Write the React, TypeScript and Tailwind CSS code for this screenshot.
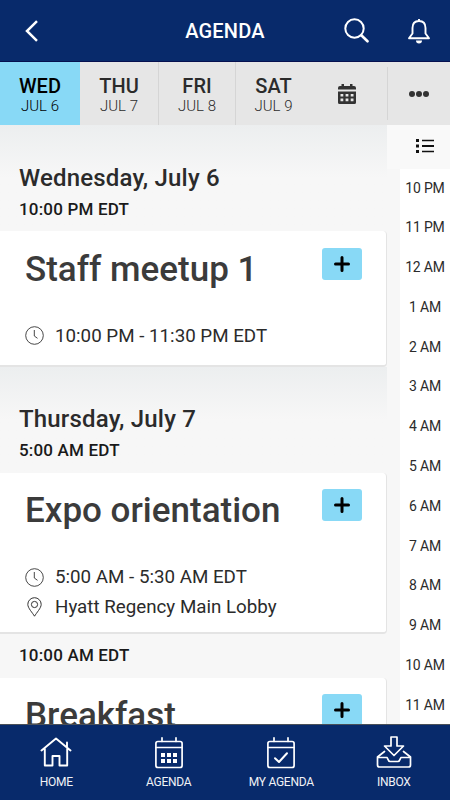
import React from 'react';

interface Session {
  title: string;
  time?: string;
  place?: string;
}

const days = [
  { name: 'WED', date: 'JUL 6', box: 'w-20 bg-[#88d9f6] text-black' },
  { name: 'THU', date: 'JUL 7', box: 'w-[78px] text-[#2b2b2b]' },
  { name: 'FRI', date: 'JUL 8', box: 'w-[77px] border-l border-[#d5d5d5] text-[#2b2b2b]' },
  { name: 'SAT', date: 'JUL 9', box: 'w-[76px] border-l border-[#d5d5d5] text-[#2b2b2b]' },
];

const hours = [
  '10 PM', '11 PM', '12 AM', '1 AM', '2 AM', '3 AM', '4 AM',
  '5 AM', '6 AM', '7 AM', '8 AM', '9 AM', '10 AM', '11 AM',
];

const CalendarIcon = () => (
  <svg width="18" height="20" viewBox="0 0 18 20" fill="#333">
    <path d="M0 5.500V4a2 2 0 0 1 2-2h1.500V0H6v2h6V0h2.500v2H16a2 2 0 0 1 2 2v1.500z" />
    <path fillRule="evenodd" d="M0 7.500h18V18.500a1.500 1.500 0 0 1-1.500 1.500h-15A1.500 1.500 0 0 1 0 18.500zM2.500 10v2.500h2.800V10zm5.100 0v2.500h2.800V10zm5.100 0v2.500h2.800V10zM2.500 14.500v2.800h2.800v-2.800zm5.100 0v2.800h2.800v-2.800zm5.100 0v2.800h2.800v-2.800z" />
  </svg>
);

const ListIcon = () => (
  <svg width="18" height="14" viewBox="0 0 18 14" fill="#111">
    <path d="M0 0h3v3H0zM0 5.500h3v3H0zM0 11h3v3H0zM6 .8h12v1.400H6zM6 6h12v2H6zM6 11.800h12v1.400H6z" />
  </svg>
);

const ClockIcon = () => (
  <svg width="19" height="19" viewBox="0 0 19 19" fill="none" stroke="#333" strokeWidth="0.900">
    <circle cx="9.500" cy="9.500" r="8.800" />
    <path d="M9.300 4v6l3.200 2.300" />
  </svg>
);

const PinIcon = () => (
  <svg width="19" height="20" viewBox="0 0 19 20" fill="none" stroke="#333" strokeWidth="1">
    <path d="M9.500 19.200C7.500 15.800 2.800 11 2.800 7.400a6.700 6.700 0 0 1 13.400 0c0 3.600-4.700 8.400-6.700 11.800z" />
    <circle cx="9.500" cy="7.500" r="3.100" />
  </svg>
);

const HomeIcon = () => (
  <svg width="32" height="30" viewBox="0 0 32 30" fill="none" stroke="#fff" strokeWidth="1.900" strokeLinejoin="round" strokeLinecap="round">
    <path d="M1.500 13.500 16 1.500 30.500 13.500M4.800 12v16.500h7.700V19h7v9.500h7.700V12M27 10V5.500" />
  </svg>
);

const AgendaIcon = ({ checked = false }: { checked?: boolean }) => (
  <svg width="30" height="33" viewBox="0 0 30 33" fill="none" stroke="#fff" strokeWidth="1.700" strokeLinecap="round" strokeLinejoin="round">
    <rect x="1.900" y="5.500" width="26.200" height="26" rx="2" />
    <path d="M2 11.500h26M8 1.800v3.500M22 1.800v3.500" />
    {checked ? (
      <path d="m9 22.200 4 3.800 8-8.700" strokeWidth="2" />
    ) : (
      <path stroke="none" fill="#fff" d="M7 17h4v4H7zM13 17h4v4h-4zM19 17h4v4h-4zM7 23h4v4H7zM13 23h4v4h-4zM19 23h4v4h-4z" />
    )}
  </svg>
);

const InboxIcon = () => (
  <svg width="36" height="32" viewBox="0 0 36 32" fill="none" stroke="#fff" strokeWidth="1.700" strokeLinejoin="round" strokeLinecap="round">
    <path d="M15 1h6v9h6.500L18 19.500 8.500 10H15z" />
    <path d="M8.500 15.500 1.500 21v8a2 2 0 0 0 2 2h29a2 2 0 0 0 2-2v-8l-7-5.500M1.500 21.500h9.500c1 1 1 4 3 4h8c2 0 2-3 3-4h9.500" />
  </svg>
);

const tabs = [
  { label: 'HOME', icon: <HomeIcon /> },
  { label: 'AGENDA', icon: <AgendaIcon /> },
  { label: 'MY AGENDA', icon: <AgendaIcon checked /> },
  { label: 'INBOX', icon: <InboxIcon /> },
];

const DayHeading: React.FC<{ day: string; time: string }> = ({ day, time }) => (
  <div className="bg-linear-to-b from-[#eceeef] to-[#f7f7f7] to-50% pl-[19px] flex flex-col justify-end pb-[10.800px]">
    <h2 className="text-2xl leading-[30px] font-medium tracking-[0.180px] text-[#2b2b2b]">{day}</h2>
    <p className="mt-1 text-[17px] leading-6 font-medium tracking-[0.180px] text-[#1a1a1a]">{time}</p>
  </div>
);

const SessionCard: React.FC<Session> = ({ title, time, place }) => (
  <div className="w-[387px] h-full rounded-r-[4px] bg-white border-r border-b-2 border-[#e4e4e4] pl-[25px] pr-6 pt-[16.400px]">
    <div className="flex justify-between">
      <h3 className="text-[35px] leading-[44px] font-medium text-[#3b3b3b]">{title}</h3>
      <button className="w-10 h-8 rounded-[3px] bg-[#88d9f6] flex items-center justify-center">
        <svg width="16" height="16" viewBox="0 0 16 16" stroke="#000" strokeWidth="3" strokeLinecap="round">
          <path d="M8 1.500v13M1.500 8h13" />
        </svg>
      </button>
    </div>
    {time && (
      <div className="mt-[29px] flex items-center h-[30px] gap-[11px] text-[18.750px] text-[#2b2b2b]">
        <ClockIcon />
        <span>{time}</span>
      </div>
    )}
    {place && (
      <div className="flex items-center h-[30px] gap-[11px] text-[18.750px] text-[#2b2b2b]">
        <PinIcon />
        <span>{place}</span>
      </div>
    )}
  </div>
);

export default function App() {
  return (
    <div className="w-[450px] h-[800px] flex flex-col overflow-hidden bg-[#f7f7f7] font-['Roboto',sans-serif]">
      <header className="h-[62px] shrink-0 bg-[#082a6b] border-b border-[#06104f] grid grid-cols-3 items-center text-white">
        <svg className="ml-[25px]" width="14" height="22" viewBox="0 0 14 22" fill="none" stroke="#fff" strokeWidth="2.500">
          <path d="M12 1.200 2 11l10 9.800" />
        </svg>
        <h1 className="text-center text-xl font-medium tracking-[0.200px]">AGENDA</h1>
        <div className="flex justify-end items-center gap-[39px] pr-5">
          <svg width="25" height="25" viewBox="0 0 25 25" fill="none" stroke="#fff" strokeWidth="2" strokeLinecap="round">
            <circle cx="10.500" cy="10.500" r="9.200" />
            <path d="m17.300 17.300 6.200 6" strokeWidth="2.600" />
          </svg>
          <svg width="22" height="26" viewBox="0 0 22 26" fill="none" stroke="#fff" strokeWidth="1.900" strokeLinejoin="round">
            <path d="M11 1v2M11 3C7 3 4.500 5.500 4.500 10v5.500L1 20.200h20l-3.500-4.700V10C17.500 5.500 15 3 11 3z" />
            <path d="M8 22.500h6a3 3 0 0 1-6 0z" fill="#fff" stroke="none" />
          </svg>
        </div>
      </header>

      <nav className="h-[63px] shrink-0 flex bg-[#e6e6e6]">
        {days.map(d => (
          <div key={d.name} className={`flex flex-col items-center pt-3 ${d.box}`}>
            <span className="text-[20px] leading-6 font-medium">{d.name}</span>
            <span className="text-[15px] leading-4 font-light">{d.date}</span>
          </div>
        ))}
        <div className="flex-1 pr-1 flex items-center justify-center">
          <CalendarIcon />
        </div>
        <div className="w-[63px] my-[5px] border-l border-[#d5d5d5] flex items-center justify-center gap-[1px]">
          <i className="size-1.5 rounded-full bg-[#333]" />
          <i className="size-1.5 rounded-full bg-[#333]" />
          <i className="size-1.5 rounded-full bg-[#333]" />
        </div>
      </nav>

      <div className="flex-1 min-h-0 flex overflow-hidden">
        <main className="w-[387px] grid grid-rows-[106.400px_135.600px_106px_161px_44px_160px]">
          <DayHeading day="Wednesday, July 6" time="10:00 PM EDT" />
          <SessionCard title="Staff meetup 1" time="10:00 PM - 11:30 PM EDT" />
          <DayHeading day="Thursday, July 7" time="5:00 AM EDT" />
          <SessionCard title="Expo orientation" time="5:00 AM - 5:30 AM EDT" place="Hyatt Regency Main Lobby" />
          <div className="pl-[19px] flex items-center text-[17px] font-medium tracking-[0.180px] text-[#1a1a1a]">10:00 AM EDT</div>
          <SessionCard title="Breakfast" />
        </main>
        <aside className="flex-1 flex flex-col">
          <div className="h-[44px] shrink-0 bg-[#f9f9f9] flex items-center justify-end pr-4 pb-0.5">
            <ListIcon />
          </div>
          <div className="ml-[13px] flex-1 bg-white">
            {hours.map(h => (
              <div key={h} className="h-[39.770px] pb-[1.500px] flex items-center justify-center text-[14px] tracking-[-0.200px] text-[#2b2b2b]">{h}</div>
            ))}
          </div>
        </aside>
      </div>

      <footer className="h-[76px] shrink-0 bg-[#082a6b] border-t border-[#4a5058] grid grid-cols-4 text-white">
        {tabs.map(t => (
          <div key={t.label} className="flex flex-col items-center">
            <div className="mt-2.5 h-[34px] flex items-center">{t.icon}</div>
            <span className="mt-[5px] text-xs leading-4 tracking-[-0.250px] text-[#f0f2f6]">{t.label}</span>
          </div>
        ))}
      </footer>
    </div>
  );
}
